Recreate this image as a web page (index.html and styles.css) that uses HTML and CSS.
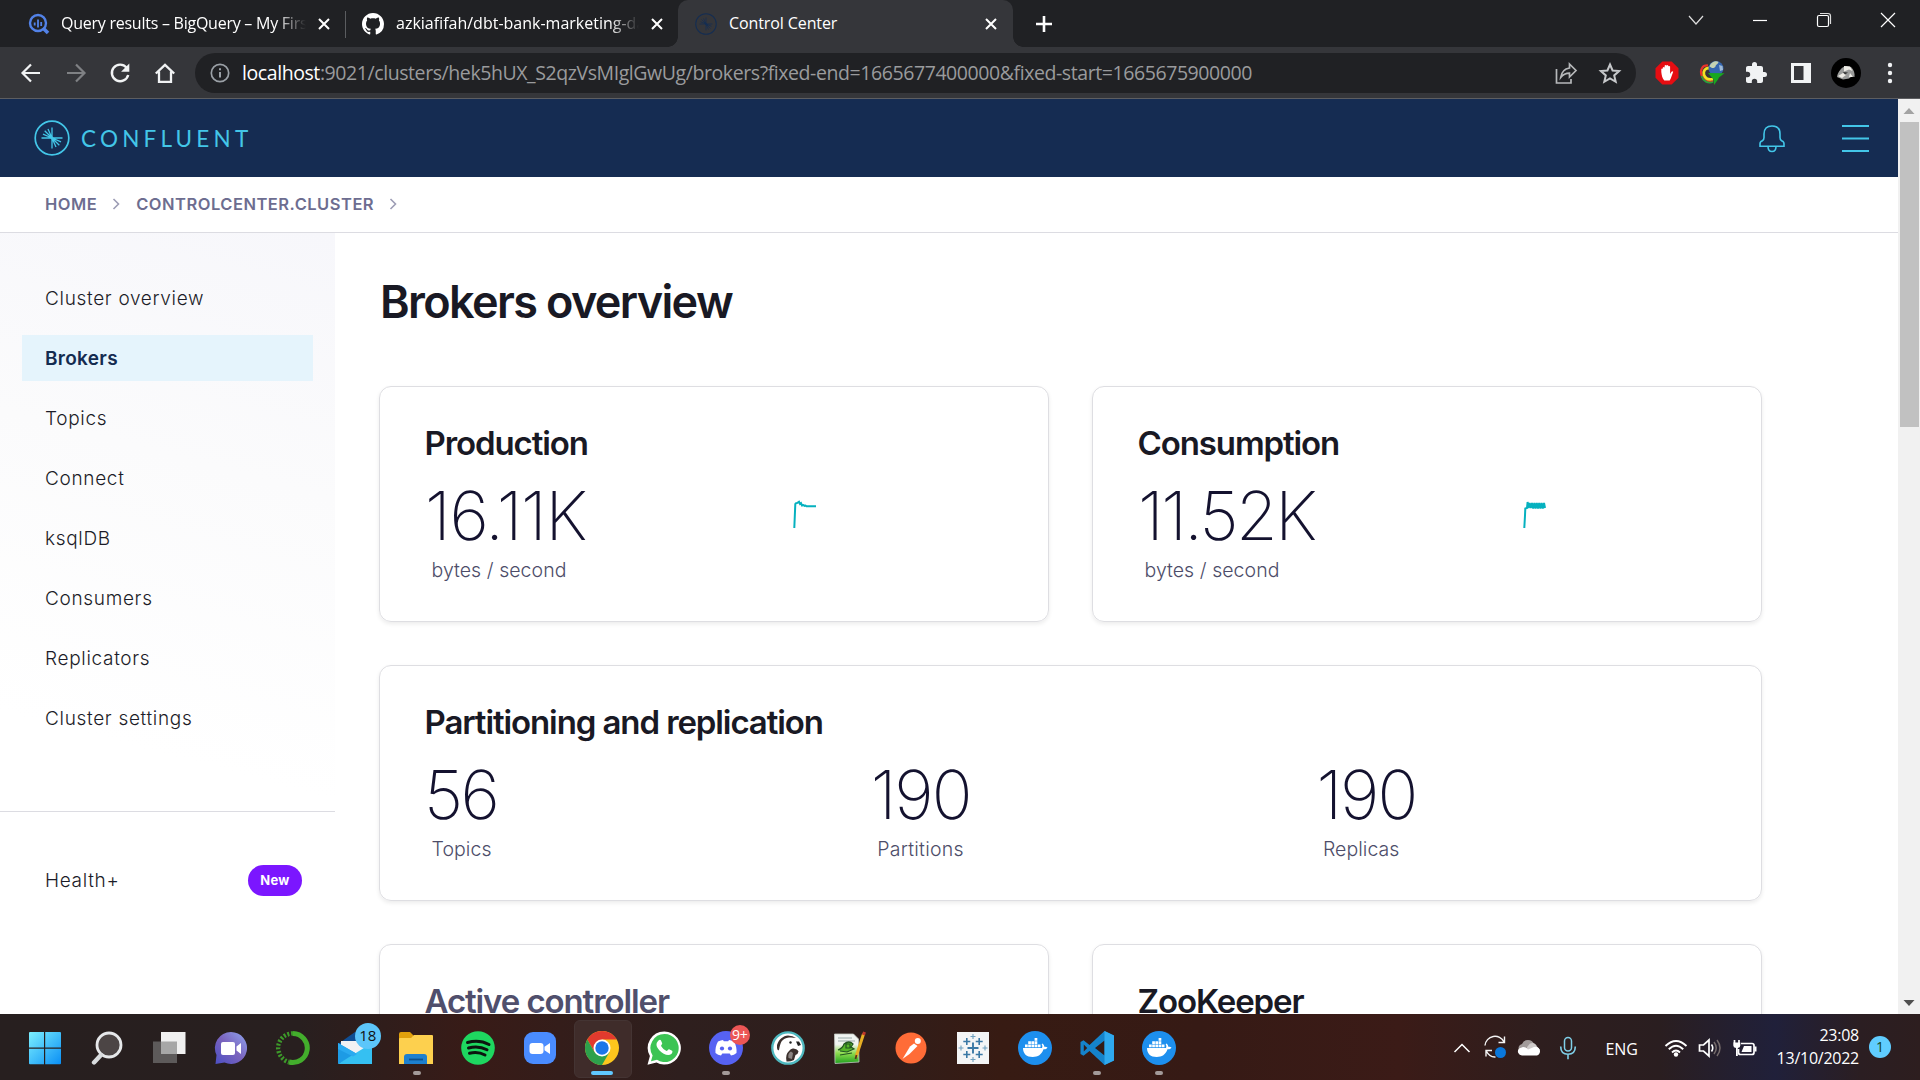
FILE: index.html
```html
<!DOCTYPE html>
<html lang="en">
<head>
<meta charset="utf-8">
<title>Control Center</title>
<link rel="stylesheet" href="styles.css">
</head>
<body>
<svg class="defs" aria-hidden="true">
  <symbol id="close" viewBox="0 0 16 16"><path d="M3 3l10 10M13 3L3 13" stroke="currentColor" stroke-width="2" fill="none"/></symbol>
  <symbol id="burst" viewBox="0 0 36 36">
    <g fill="none" stroke="currentColor" stroke-width="1.7"><circle cx="18" cy="18" r="16.8"/>
    <path d="M7.500 18H28.500M18 7.500V28.500M18 18L14 9M18 18L10.700 10.700M18 18L9 14.200M18 18L22 27M18 18L25.300 25.300M18 18L27 21.800" stroke-width="1.3"/><path d="M15.500 15.500l5 5" stroke-width="2.600"/></g>
  </symbol>
  <symbol id="whale" viewBox="0 0 34 34"><circle cx="17" cy="17" r="17" fill="#1d8fee"/><path fill="#fff" d="M5 17h19c.6-1.200.4-2.600-.4-3.700l.8-.8c1.300.9 1.900 2.100 1.900 3.300 1.200-.2 2.300 0 3.200.6-.7 1.400-2.100 2-4 1.900C23.500 23.800 20 26 14.700 26 8.500 26 5 22.700 5 17z"/><path fill="#fff" d="M7 13.400h2.700v2.800H7zM10.200 13.400h2.700v2.800h-2.700zM13.400 13.400h2.700v2.800h-2.700zM16.600 13.400h2.700v2.800h-2.700zM19.800 13.400h2.700v2.800h-2.700zM10.200 10.200h2.700V13h-2.700zM13.400 10.200h2.700V13h-2.700zM16.600 10.200h2.700V13h-2.700zM16.600 7h2.700v2.800h-2.700z"/></symbol>
</svg>

<div class="tabstrip">
  <div class="tab tab-first">
    <svg width="22" height="22" viewBox="0 0 22 22"><circle cx="10" cy="10" r="8" fill="none" stroke="#5282e8" stroke-width="2.400"/><path d="M6.700 9.500v3M10 6.500v8M13.200 9v4" stroke="#5282e8" stroke-width="1.800"/><path d="M15.500 15.500l4.500 4.500" stroke="#5282e8" stroke-width="3.600"/></svg>
    <span class="tab-title fade">Query results – BigQuery – My First</span>
    <svg class="tab-close" width="16" height="16"><use href="#close"/></svg>
  </div>
  <div class="tab tab-second">
    <svg width="22" height="22" viewBox="0 0 16 16"><path fill="#fff" d="M8 0C3.580 0 0 3.580 0 8c0 3.540 2.290 6.530 5.470 7.590.4.070.55-.17.55-.38 0-.19-.01-.82-.01-1.490-2.010.37-2.530-.49-2.690-.94-.09-.23-.48-.94-.82-1.130-.28-.15-.68-.52-.01-.53.63-.01 1.080.58 1.230.82.72 1.210 1.870.87 2.330.66.07-.52.28-.87.51-1.070-1.780-.2-3.640-.89-3.640-3.950 0-.87.31-1.590.82-2.150-.08-.2-.36-1.020.08-2.120 0 0 .67-.21 2.200.82.64-.18 1.320-.27 2-.27s1.360.09 2 .27c1.530-1.040 2.200-.82 2.200-.82.44 1.100.16 1.920.08 2.120.51.56.82 1.270.82 2.150 0 3.070-1.870 3.750-3.650 3.950.29.25.54.73.54 1.480 0 1.070-.01 1.930-.01 2.200 0 .21.15.46.55.38A8.010 8.010 0 0 0 16 8c0-4.420-3.580-8-8-8z"/></svg>
    <span class="tab-title fade">azkiafifah/dbt-bank-marketing-data</span>
    <svg class="tab-close" width="16" height="16"><use href="#close"/></svg>
  </div>
  <div class="tab tab-active">
    <svg class="fav" width="22" height="22"><use href="#burst"/></svg>
    <span class="tab-title">Control Center</span>
    <svg class="tab-close" width="16" height="16"><use href="#close"/></svg>
  </div>
  <svg class="new-tab" width="18" height="18" viewBox="0 0 18 18"><path d="M9 1v16M1 9h16" stroke="#fff" stroke-width="2.600"/></svg>
  <div class="window-buttons">
    <svg width="16" height="16" viewBox="0 0 16 16"><path d="M1 4l7 8 7-8" fill="none" stroke="#ddd" stroke-width="1.200"/></svg>
    <svg width="16" height="16" viewBox="0 0 16 16"><path d="M1 8.500h14" stroke="#fff" stroke-width="1.200"/></svg>
    <svg width="16" height="16" viewBox="0 0 16 16"><rect x="1.500" y="3.500" width="11" height="11" rx="1.500" fill="none" stroke="#fff" stroke-width="1.200"/><path d="M4 1.500h8q2.500 0 2.500 2.500v8" fill="none" stroke="#ddd" stroke-width="1.200"/></svg>
    <svg width="16" height="16" viewBox="0 0 16 16"><path d="M1 1l14 14M15 1L1 15" stroke="#fff" stroke-width="1.200"/></svg>
  </div>
</div>

<div class="toolbar">
  <div class="nav-buttons">
    <svg width="24" height="24" viewBox="0 0 24 24"><path d="M21 12H4M12 3.500L3.500 12l8.500 8.500" fill="none" stroke="#f1f3f4" stroke-width="2.200"/></svg>
    <svg width="24" height="24" viewBox="0 0 24 24"><path d="M3 12h17M12 3.500l8.500 8.500-8.500 8.500" fill="none" stroke="#7f8184" stroke-width="2.200"/></svg>
    <svg width="24" height="24" viewBox="0 0 24 24"><path d="M18.500 6.500A8.300 8.300 0 1 0 20.200 14" fill="none" stroke="#f1f3f4" stroke-width="2.400"/><path d="M21.300 2.500v8.200h-8.200z" fill="#f1f3f4"/></svg>
    <svg width="24" height="24" viewBox="0 0 24 24"><path d="M2.800 12.500L12 3.800l9.200 8.700M6 10.500v10.300h12V10.500" fill="none" stroke="#f1f3f4" stroke-width="2.300"/></svg>
  </div>
  <div class="omnibox">
    <svg width="20" height="20" viewBox="0 0 20 20"><circle cx="10" cy="10" r="8.700" fill="none" stroke="#9aa0a6" stroke-width="1.700"/><path d="M10 9v5.500M10 5.300v2" stroke="#9aa0a6" stroke-width="2"/></svg>
    <span class="url"><b>localhost</b>:9021/clusters/hek5hUX_S2qzVsMIglGwUg/brokers?fixed-end=1665677400000&amp;fixed-start=1665675900000</span>
    <svg width="24" height="24" viewBox="0 0 24 24"><path d="M2.500 8v14h14.500v-4" fill="none" stroke="#b6b8ba" stroke-width="1.700"/><path d="M15.500 3l6.500 6.500-6.500 6.500v-3.800c-4 0-6.500 1.300-8.800 4.300.7-5 3.300-8.700 8.800-9.500z" fill="none" stroke="#b6b8ba" stroke-width="1.700"/></svg>
    <svg width="24" height="24" viewBox="0 0 24 24"><path d="M12 3.500l2.600 6 6.500.6-4.900 4.300 1.500 6.400L12 17.400l-5.700 3.400 1.500-6.400-4.900-4.300 6.500-.6z" fill="none" stroke="#c6c8ca" stroke-width="2"/></svg>
  </div>
  <div class="extensions">
    <svg width="24" height="24" viewBox="0 0 24 24"><path d="M7.300.500h9.400l6.800 6.800v9.400l-6.800 6.800H7.300L.5 16.700V7.300z" fill="#e60d12"/><path d="M7.800 6.500q.9-1 1.800 0V4.700q.9-1.200 1.800-.2.900-1.200 1.800 0l.2.700q1-.7 1.700.3v7.500l1.200-2q1-1.200 1.900-.3c-1 2.500-1.700 5.500-3.500 8.800H9.300C7.300 17.500 6.600 14 6.300 11V8q.6-1 1.500-.2z" fill="#fff"/></svg>
    <svg width="26" height="26" viewBox="0 0 26 26"><path d="M9 5.500C3 5 1 10 2.500 15c1.500 5 6.500 7.500 11.500 6" fill="none" stroke="#e8332a" stroke-width="2.200"/><path d="M10 8C6 8 4 11 5 15c1.500 3.500 5 5 9 4" fill="none" stroke="#f3e321" stroke-width="2.800"/><path d="M2.500 16c1.500 5 6.500 8 11.500 6" fill="none" stroke="#2aa13c" stroke-width="1.800"/><circle cx="17" cy="8.500" r="7.500" fill="#3566b0"/><path d="M10.500 6.500c1.500-5 7-6 9-4.500-.5 2.500-2.500 2-3 4.500-2 2.500-4 1.500-6 0z" fill="#c6d3b2"/><path d="M20 5l3.500 1 .5 4-3 1z" fill="#9fbad6"/><path d="M9 13l16.500.2-5.500 4.300-1 2-4 5.500-.5-5.500z" fill="#18a81f"/></svg>
    <svg width="24" height="24" viewBox="0 0 24 24"><path fill="#f1f3f4" d="M20.500 11H19V7c0-1.100-.9-2-2-2h-4V3.500a2.500 2.500 0 0 0-5 0V5H4c-1.100 0-2 .9-2 2v3.800h1.500a2.700 2.700 0 0 1 0 5.400H2V20c0 1.100.9 2 2 2h3.800v-1.500a2.700 2.700 0 0 1 5.400 0V22H17c1.100 0 2-.9 2-2v-4h1.500a2.500 2.500 0 0 0 0-5z"/></svg>
    <svg width="24" height="24" viewBox="0 0 24 24"><path fill="#f1f3f4" fill-rule="evenodd" d="M2 2h20v20H2zM5 5v14h9.500V5z"/></svg>
    <svg width="30" height="30" viewBox="0 0 30 30"><circle cx="15" cy="15" r="15" fill="#000"/><path d="M6 19c1-6 5-10 9-11l5 1c3 3 4 6 3.500 10l-3-.5-2.500 2-6 1z" fill="#9b9c9b"/><path d="M13 8l6 .5 2.500 4.500-3.500-1.500-5 2zM7 18l5-3 3 2-4 3zM18 19l1-4 3 4z" fill="#eeece6"/><path d="M12 14l5 .5-3 2z" fill="#333"/></svg>
    <svg width="24" height="24" viewBox="0 0 24 24"><g fill="#f1f3f4"><circle cx="12" cy="4" r="2.200"/><circle cx="12" cy="12" r="2.200"/><circle cx="12" cy="20" r="2.200"/></g></svg>
  </div>
</div>

<div class="viewport">
  <div class="page">
    <header class="app-header">
      <svg class="logo" width="36" height="36"><use href="#burst"/></svg>
      <span class="brand">CONFLUENT</span>
      <svg class="bell" width="26" height="30" viewBox="0 0 26 30"><path d="M5 13.500V10Q5 2 13 2t8 8v3.500q0 2 1.500 3.200 2.500.8 2.500 3v2.600H1v-2.600q0-2.200 2.500-3Q5 15.500 5 13.500zM9 22.500q0 5 4 5t4-5" fill="none" stroke="#43c6e8" stroke-width="1.600"/></svg>
      <svg width="27" height="30" viewBox="0 0 27 30"><path d="M0 2h27M0 14.500h27M0 27h27" stroke="#43c6e8" stroke-width="1.900"/></svg>
    </header>
    <nav class="breadcrumb">
      <span>HOME</span>
      <svg width="8" height="12" viewBox="0 0 8 12"><path d="M1.500 1l5 5-5 5" fill="none" stroke="#9d9db5" stroke-width="1.600"/></svg>
      <span>CONTROLCENTER.CLUSTER</span>
      <svg width="8" height="12" viewBox="0 0 8 12"><path d="M1.500 1l5 5-5 5" fill="none" stroke="#9d9db5" stroke-width="1.600"/></svg>
    </nav>
    <div class="content">
      <aside class="sidebar">
        <div class="menu">
          <a>Cluster overview</a>
          <a class="active">Brokers</a>
          <a>Topics</a>
          <a>Connect</a>
          <a>ksqlDB</a>
          <a>Consumers</a>
          <a>Replicators</a>
          <a>Cluster settings</a>
        </div>
        <div class="menu-extra">
          <a>Health+<em>New</em></a>
        </div>
      </aside>
      <main class="main">
        <h1>Brokers overview</h1>
        <div class="cards">
          <section class="card">
            <h2>Production</h2>
            <div class="row">
              <div class="metric"><span class="value value-production">16.11K</span><span class="unit">bytes / second</span></div>
              <svg class="spark-production" width="24" height="30" viewBox="0 0 24 30"><path d="M1.300 28L2.300 4Q2.500 3 4 3l2-1.200L7 4l1-.8L9 5.500l1.500-.5 1 .8 1-.3 1 .8h9.500" fill="none" stroke="#06b1bf" stroke-width="2"/></svg>
            </div>
          </section>
          <section class="card">
            <h2>Consumption</h2>
            <div class="row">
              <div class="metric"><span class="value value-consumption">11.52K</span><span class="unit">bytes / second</span></div>
              <svg class="spark-consumption" width="24" height="30" viewBox="0 0 24 30"><path d="M1.300 28L2 15.500 2.300 8.500 4 8 4.600 2l.8 6 1.200-5 1.200 5L9 3l1.200 5.500L11.400 3l1.200 5.500L13.800 3 15 8.500 16.200 3l1.200 5.500L18.600 3l1.200 5.500L21 3l1 5" fill="none" stroke="#06b1bf" stroke-width="2"/></svg>
            </div>
          </section>
          <section class="card wide">
            <h2>Partitioning and replication</h2>
            <div class="row thirds">
              <div class="metric"><span class="value value-topics">56</span><span class="unit">Topics</span></div>
              <div class="metric"><span class="value">190</span><span class="unit unit-loose">Partitions</span></div>
              <div class="metric"><span class="value">190</span><span class="unit">Replicas</span></div>
            </div>
          </section>
          <section class="card muted"><h2>Active controller</h2></section>
          <section class="card"><h2>ZooKeeper</h2></section>
        </div>
      </main>
    </div>
  </div>
  <div class="scrollbar">
    <svg width="22" height="23" viewBox="0 0 22 23"><path d="M5.500 15h11L11 9z" fill="#a3a3a3"/></svg>
    <div class="thumb"></div>
    <svg class="down" width="22" height="23" viewBox="0 0 22 23"><path d="M5.500 9h11L11 15z" fill="#505050"/></svg>
  </div>
</div>

<footer class="taskbar">
  <div class="apps">
    <div class="app"><svg width="34" height="34" viewBox="0 0 34 34"><defs><linearGradient id="win" x1="0" y1="0" x2="1" y2="1"><stop offset="0" stop-color="#7cf0ff"/><stop offset="1" stop-color="#0a8ff5"/></linearGradient></defs><path fill="url(#win)" d="M1 2q0-1 1-1h14v15.500H1zM17.200 1H32q1 0 1 1v14.500H17.200zM1 17.700h15v15.500H2q-1 0-1-1zM17.200 17.700H33V32.200q0 1-1 1H17.200z"/></svg></div>
    <div class="app"><svg width="34" height="34" viewBox="0 0 34 34"><circle cx="19" cy="14" r="12" fill="#4c4545" stroke="#e6e8ea" stroke-width="2.800"/><path d="M11 24l-7 7.500" stroke="#d9dcde" stroke-width="4.400" stroke-linecap="round"/></svg></div>
    <div class="app"><svg width="34" height="34" viewBox="0 0 34 34"><path d="M1 10.500h24V32H1z" fill="#5d5a5a"/><path d="M9 1h24.500v22H9z" fill="#f0f0f0"/><path d="M9 10.500h16V23H9z" fill="#a7a7a7"/></svg></div>
    <div class="app"><svg width="34" height="34" viewBox="0 0 34 34"><defs><linearGradient id="chat" x1="0" y1="1" x2="1" y2="0"><stop offset="0" stop-color="#4b4fc4"/><stop offset=".5" stop-color="#7a63bd"/><stop offset="1" stop-color="#8fa6f0"/></linearGradient></defs><path d="M17 1a16 16 0 1 1-6.500 30.600L1.500 33l1-9A16 16 0 0 1 17 1z" fill="url(#chat)"/><rect x="7" y="11" width="14" height="13" rx="2" fill="#fff"/><path d="M22.500 15.500L27 12v11l-4.500-3.500z" fill="#fff"/></svg></div>
    <div class="app"><svg width="36" height="36" viewBox="0 0 36 36"><path d="M18 3.500A14.500 14.500 0 1 1 14 32" fill="none" stroke="#43ad2c" stroke-width="5"/><path d="M18 3.500A14.500 14.500 0 0 0 14 32" fill="none" stroke="#3d9a2a" stroke-width="4.600" stroke-dasharray="2 1.700"/><path d="M17 6A12 12 0 0 0 13 29" fill="none" stroke="#2a2322" stroke-width="1" stroke-dasharray="3 1.500"/></svg></div>
    <div class="app"><svg width="34" height="34" viewBox="0 0 34 34"><path d="M0 13L17 1l17 12v19H0z" fill="#0f4e94"/><path d="M3 10h28v14H3z" fill="#f1f1f3"/><path d="M0 12l19 11L0 33z" fill="#1d9be5"/><path d="M34 12L0 33h34z" fill="#35c0f2"/><path d="M0 12l19 11-4 2.400L0 18z" fill="#2aaaf0"/></svg><span class="count">18</span></div>
    <div class="app"><svg width="34" height="34" viewBox="0 0 34 34"><path d="M0 3q0-2 2-2h9l4 4v6H0z" fill="#e0a00c"/><path d="M0 8q0-1 1-1h11l3-3h18q1 0 1 1v28H0z" fill="#fdd04e"/><path d="M5 33v-7q0-3 3-3h17q3 0 3 3v7z" fill="#1d80cf"/><path d="M10 28.500h14" stroke="#0b518f" stroke-width="1.800"/></svg><i></i></div>
    <div class="app"><svg width="34" height="34" viewBox="0 0 34 34"><circle cx="17" cy="17" r="16.800" fill="#1ed760"/><path d="M6.500 11.500c7-2 15-1.500 21.500 2M7.500 17c6-1.700 13-1.200 18.500 1.800M8.500 22.300c5-1.300 10.500-1 15.500 1.700" fill="none" stroke="#0c150f" stroke-width="3" stroke-linecap="round"/></svg></div>
    <div class="app"><svg width="34" height="34" viewBox="0 0 34 34"><rect x="1" y="1" width="32" height="32" rx="9" fill="#4a8cff"/><rect x="6.500" y="12" width="14" height="11" rx="3" fill="#fff"/><path d="M21.500 15.800L27 12v11l-5.500-3.700z" fill="#fff"/></svg></div>
    <div class="app current"><svg width="34" height="34" viewBox="0 0 34 34"><circle cx="17" cy="17" r="17" fill="#fdc61d"/><path d="M2.300 8.500A17 17 0 0 1 31.700 8.500H17L9.600 21.300z" fill="#e23a2e"/><path d="M2.300 8.500A17 17 0 0 0 17 34l7.400-12.800H9.600z" fill="#2da14c"/><circle cx="17" cy="17" r="8.500" fill="#fff"/><circle cx="17" cy="17" r="6.700" fill="#1c76e8"/></svg><i></i></div>
    <div class="app"><svg width="34" height="34" viewBox="0 0 34 34"><path d="M17.500.500A16.500 16.500 0 1 1 9.500 31.500L.5 33.800l2.400-8.700A16.500 16.500 0 0 1 17.500.500z" fill="#fff"/><path d="M17.500 3A14 14 0 1 1 10 28.700L4 30.300l1.600-5.900A14 14 0 0 1 17.500 3z" fill="#3cc454"/><path d="M11.500 9.500c1-1 2.200-.8 2.600.2l1.100 2.600c.2.700-1.400 2.100-1.100 2.700 1.300 2.300 3.200 3.900 5.500 4.900.8.200 1.700-2 2.500-1.700l3 1.500c.8.500.2 2.300-.8 3.300-3 2.500-8.500-.1-11.800-3.600-3.300-3.500-4.200-6.900-1-9.900z" fill="#fff"/></svg></div>
    <div class="app"><svg width="34" height="34" viewBox="0 0 34 34"><circle cx="17" cy="17" r="17" fill="#5662f2"/><path d="M9 10.500q3-1.600 5-1.600l.8 1.300h4.400l.8-1.300q2 0 5 1.600 3 5 2.500 11.500-2.500 2.200-5.500 2.500l-1.300-2h-7.400l-1.300 2Q9 24.200 6.500 22 6 15.500 9 10.500z" fill="#fff"/><circle cx="13" cy="17.500" r="2.100" fill="#5662f2"/><circle cx="21" cy="17.500" r="2.100" fill="#5662f2"/></svg><span class="alert">9+</span><i></i></div>
    <div class="app"><svg width="34" height="34" viewBox="0 0 34 34"><circle cx="17" cy="17" r="15.700" fill="#fff" stroke="#4fb9c0" stroke-width="2.300"/><path d="M6 14C8 8 12 5 17 4.500q5 0 8 2.500-3-.8-7-.5-5 .5-7.500 4Q9 13 8 19 6.500 20 6 17z" fill="#3b302d"/><path d="M15.500 30.500q-1.500-7 2.500-10.500 2-3 4.500-2.500 4 .5 5 3-.5 3-3 3.500l-1.500 5q-4 2-7.500 1.500z" fill="#3b302d"/><path d="M17.500 27q-1-5 2.500-6.500l2 1.500-1 6z" fill="#8b8482"/><circle cx="19.500" cy="11.500" r="1.200" fill="#222"/><path d="M25 10.500h3l2 3.500-3 1z" fill="#222"/></svg></div>
    <div class="app"><svg width="34" height="34" viewBox="0 0 34 34"><defs><linearGradient id="np" x1="0" y1="0" x2="0" y2="1"><stop offset=".35" stop-color="#f1f4f1"/><stop offset=".65" stop-color="#8edc4e"/><stop offset="1" stop-color="#1fa01f"/></linearGradient></defs><path d="M2.500 3h19l5 5 .5 23-24 1.500z" fill="url(#np)" stroke="#c3c9c3" stroke-width=".8"/><path d="M6 7h14M6 10h17" stroke="#9aa" stroke-width="1"/><path d="M6 19q5-2 6-6 5-4 9 0l-2 3 3 2-7 3-7-1M8 24l12-2M14 13h4v4h-4z" fill="#56b52b" stroke="#252" stroke-width="1.200"/><path d="M31.500 3L24 26" stroke="#e6ae24" stroke-width="3"/><path d="M32.500 1l-1 3" stroke="#c0392b" stroke-width="3"/><path d="M24.500 24l-1 4" stroke="#54371b" stroke-width="1.800"/></svg></div>
    <div class="app"><svg width="34" height="34" viewBox="0 0 34 34"><circle cx="17" cy="17" r="15.500" fill="#ff6c37"/><circle cx="23.800" cy="10" r="3" fill="#fff"/><path d="M20 12.500l3.500 2.500-8 8-7 5 4.500-7.500 3-5z" fill="#fff"/></svg></div>
    <div class="app"><svg width="34" height="34" viewBox="0 0 34 34"><path d="M1 1h32v32H1z" fill="#f4f5f6"/><g fill="none" stroke="#3a78a5" stroke-width="1.900"><path d="M17 11.500v11M11.500 17h11"/><path d="M10.800 7v7M7.300 10.500h7M23.200 7v7M19.700 10.500h7M10.800 20v7M7.300 23.500h7M23.200 20v7M19.700 23.500h7" stroke-width="1.600"/><path d="M17 3v5M14.500 5.500h5M17 26v5M14.500 28.500h5M5 14.500v5M2.500 17h5M29 14.500v5M26.500 17h5" stroke-width="1.100" stroke="#6fa0bf"/></g></svg></div>
    <div class="app"><svg width="34" height="34"><use href="#whale"/></svg></div>
    <div class="app"><svg width="34" height="34" viewBox="0 0 34 34"><path d="M24.500 0L34 4.500v25L24.500 34 9.500 20l-6 4.700L.5 23V11l3-1.700 6 4.700z" fill="#1583cb"/><path d="M24.500 9.500L15 17l9.500 7.500zM3.800 13.500v7L7.200 17z" fill="#321b17"/><path d="M24.500 0L34 4.500v25L24.500 34z" fill="#2fa9ee"/></svg><i></i></div>
    <div class="app"><svg width="34" height="34"><use href="#whale"/></svg><i></i></div>
  </div>
  <div class="tray">
    <svg width="18" height="12" viewBox="0 0 18 12"><path d="M1.500 10L9 2.500l7.500 7.500" fill="none" stroke="#fff" stroke-width="1.500"/></svg>
    <svg class="t-sync" width="24" height="24" viewBox="0 0 24 24"><path d="M2 10.500A10 10 0 0 1 21 7M21.500 1.500V7.500h-6M3 21.500V15.500h6M3 15.500Q6.500 22.500 12.500 22" fill="none" stroke="#f4f4f4" stroke-width="1.400"/><circle cx="17.500" cy="17.500" r="5.500" fill="#0a78dc"/></svg>
    <svg class="t-cloud" width="24" height="16" viewBox="0 0 24 16"><path d="M3 11a4 4 0 0 1 2-7A6.500 6.500 0 0 1 17 4z" fill="#a29b9a"/><path d="M6 12L13 3.500q5-2 7 3L23 10z" fill="#cfcbca"/><path d="M5 15.500a4.200 4.200 0 0 1-3-7l4-1.500q3 0 5 2.500l6-2.500a4.300 4.300 0 0 1 3 8.500z" fill="#fff"/></svg>
    <svg class="t-mic" width="18" height="24" viewBox="0 0 18 24"><rect x="5.500" y="1.500" width="7" height="13.500" rx="3.500" fill="none" stroke="#7fcfe8" stroke-width="1.500"/><path d="M1.700 10.500q0 7.700 7.300 7.700t7.300-7.700M9 18.200v5" fill="none" stroke="#7fcfe8" stroke-width="1.600"/></svg>
    <span class="t-lang">ENG</span>
    <svg class="t-wifi" width="24" height="18" viewBox="0 0 24 18"><g fill="none" stroke="#fff" stroke-width="1.900"><path d="M1.500 7q10.500-10 21 0"/><path d="M4.800 10.300q7.200-7 14.400 0"/><path d="M8 13.500q4-4 8 0"/></g><circle cx="12" cy="15.500" r="2.200" fill="#fff"/></svg>
    <svg class="t-vol" width="24" height="20" viewBox="0 0 24 20"><path d="M1.500 7h4L11 2v16l-5.500-5h-4z" fill="none" stroke="#fff" stroke-width="1.700"/><path d="M13.500 6.500q2.500 3.500 0 7" fill="none" stroke="#fff" stroke-width="1.600"/><path d="M16 4q4.500 6 0 12M19 2q6 8 0 16" fill="none" stroke="#756b6b" stroke-width="1.500"/></svg>
    <svg class="t-bat" width="24" height="18" viewBox="0 0 24 18"><path d="M8 4.500h11q2 0 2 2v7q0 2-2 2H7.500q-2 0-2-2V10" fill="none" stroke="#fff" stroke-width="1.700"/><path d="M11 7h7.500v6H8.500z" fill="#fff"/><path d="M21.500 7.500h2v5h-2z" fill="#fff"/><path d="M1.500 1v3M6 1v3" stroke="#fff" stroke-width="1.700"/><path d="M.3 3.500h7v3q0 2-2.500 2.500v8H3V9Q.3 8.500.3 6.500z" fill="#fff"/></svg>
    <div class="clock"><span>23:08</span><span>13/10/2022</span></div>
    <span class="notif">1</span>
  </div>
</footer>
</body>
</html>
```
FILE: styles.css
```css
* { box-sizing: border-box; }
html, body { height: 100%; }
body {
  margin: 0;
  display: flex;
  flex-direction: column;
  overflow: hidden;
  background: #fff;
  font-family: Inter, "Liberation Sans", sans-serif;
  color: #191924;
}
svg { display: block; flex: none; }
.defs { position: absolute; width: 0; height: 0; }

/* browser chrome */
.tabstrip, .toolbar, .taskbar { font-family: "Open Sans", "Noto Sans", sans-serif; }
.tabstrip { display: flex; height: 47px; flex: none; background: #202124; color: #fff; }
.tab { display: flex; align-items: center; font-size: 16px; padding-top: 1px; }
.tab-title { flex: 1; margin: -2px 0 0 12px; overflow: hidden; white-space: nowrap; letter-spacing: -0.1px; line-height: 24px; }
.fade { mask-image: linear-gradient(90deg, #000 calc(100% - 30px), transparent); }
.tab-close { margin-left: 10px; }
.tab-first { width: 345px; padding-left: 28px; padding-right: 13px; }
.tab-first .tab-title { margin-left: 11px; letter-spacing: -0.25px; }
.tab-second { width: 333px; padding-left: 17px; padding-right: 13px; position: relative; }
.tab-second .tab-title { letter-spacing: 0; }
.tab-second::before { content: ""; position: absolute; left: 0; top: 11px; width: 1px; height: 27px; background: #5b5d60; }
.tab-active { width: 335px; padding-left: 17px; padding-right: 14px; background: #35363a; border-radius: 10px 10px 0 0; position: relative; }
.tab-active::before, .tab-active::after { content: ""; position: absolute; bottom: 0; width: 10px; height: 10px; }
.tab-active::before { left: -10px; background: radial-gradient(circle at 0 0, transparent 9.5px, #35363a 10px); }
.tab-active::after { right: -10px; background: radial-gradient(circle at 100% 0, transparent 9.5px, #35363a 10px); }
.fav { color: #142d52; }
.new-tab { margin: 15px 0 0 22px; }
.window-buttons { display: flex; gap: 48px; margin: 12px 24px 0 auto; }

.toolbar { display: flex; align-items: center; height: 52px; flex: none; background: #35363a; border-bottom: 1px solid #5d5e61; }
.nav-buttons { display: flex; width: 195px; padding-left: 19px; gap: 20.7px; }
.omnibox { display: flex; align-items: center; width: 1441px; height: 40px; border-radius: 20px; padding: 0 14px 0 15px; background: #202124; }
.url { margin: 0 auto 0 12px; font-size: 19.5px; color: #9a9b9d; white-space: nowrap; letter-spacing: -0.42px; }
.url b { font-weight: 400; color: #fff; }
.omnibox svg + svg { margin-left: 20px; }
.extensions { display: grid; grid-template-columns: repeat(6, 44.6px); place-items: center; padding-left: 9px; }

/* web page */
.viewport { flex: 1; display: flex; min-height: 0; }
.page { flex: 1; display: flex; flex-direction: column; min-width: 0; }
.app-header { display: flex; align-items: center; flex: none; height: 78px; padding: 1px 29px 0 33.5px; background: #152c52; color: #43c6e8; }
.logo { margin-top: -1px; }
.brand { margin-left: 11.5px; font: 400 22.5px/30px Lato, sans-serif; letter-spacing: 4.2px; }
.bell { margin-left: auto; margin-right: 57px; }
.breadcrumb { display: flex; align-items: center; flex: none; height: 56px; padding: 0 0 1px 45px; border-bottom: 1px solid #dcdce2; font-size: 16.5px; font-weight: 600; letter-spacing: 0.5px; color: #6d6d90; }
.breadcrumb svg { margin: 0 16px 0 15px; }
.content { flex: 1; display: flex; min-height: 0; overflow: hidden; }
.sidebar { width: 335px; flex: none; }
.menu { display: flex; flex-direction: column; gap: 14px; height: 579px; padding: 42px 22px 0; border-bottom: 1px solid #dcdce2; background: linear-gradient(195deg, #f7f7fb 0, #fbfbfc 40%, #fff 85%); }
.menu-extra { padding: 45px 22px 0; }
.sidebar a { display: flex; align-items: center; height: 46px; padding-left: 23px; font-size: 19px; font-weight: 300; letter-spacing: 0.68px; color: #1c1c28; }
.sidebar a.active { background: #e5f4fc; font-weight: 600; letter-spacing: 0.3px; color: #142b50; }
.sidebar em { margin-left: auto; margin-right: 11px; width: 54px; text-align: center; border-radius: 16px; background: #7b16ff; color: #fff; font: 700 13px/31px Inter, sans-serif; letter-spacing: 0.3px; }
.main { flex: 1; padding: 42px 136px 0 44px; min-width: 0; }
.main h1 { margin: 0 0 57px 1px; font-size: 45px; line-height: 54px; font-weight: 600; letter-spacing: -1.64px; white-space: nowrap; }
.cards { display: grid; grid-template-columns: 670px 670px; gap: 43px; }
.card { height: 236px; padding: 35px 45px 0; border: 1px solid #dedee2; border-radius: 12px; box-shadow: 0 2px 4px rgba(0, 0, 0, 0.08); white-space: nowrap; }
.wide { grid-column: span 2; }
.card h2 { margin: 0 0 0 -0.5px; font-size: 33px; line-height: 42px; font-weight: 600; letter-spacing: -1.1px; }
.muted h2 { color: #504f6c; }
.row { display: flex; }
.metric { display: flex; flex-direction: column; width: 170px; }
.thirds { display: grid; grid-template-columns: repeat(3, 445.7px); }
.value { margin-top: 12px; font-size: 67.5px; line-height: 80px; font-weight: 200; letter-spacing: -2px; color: #14122f; }
.value-production { letter-spacing: -1.3px; }
.value-consumption { letter-spacing: -2.5px; }
.value-topics { margin-left: -1px; letter-spacing: -2.6px; }
.unit { margin: 1px 0 0 6.5px; font-size: 19.5px; line-height: 26px; font-weight: 300; letter-spacing: 0.05px; color: #4d4d69; }
.unit-loose { letter-spacing: 0.25px; }
.spark-production { margin: 36px 0 0 197.5px; }
.spark-consumption { margin: 36px 0 0 215px; }

.scrollbar { width: 22px; flex: none; display: flex; flex-direction: column; background: #f1f1f1; }
.thumb { height: 305px; margin: 0 1px 0 2px; background: #c1c1c1; }
.down { margin-top: auto; }

/* taskbar */
.taskbar { display: flex; justify-content: space-between; height: 66px; flex: none; color: #fff; background: linear-gradient(90deg, #271f1f 0, #281f1f 300px, #381b17 470px, #341d1a 560px, #2e1f1e 680px, #2f1e1c 850px, #371b13 1000px, #361a15 1200px, #3b1b17 1400px, #2e1e1e 1540px, #2a1e20 1660px, #20203a 1775px, #2b1e22 1860px, #2d1e1f 100%); }
.apps { display: flex; padding-left: 14.5px; }
.app { position: relative; width: 61.85px; display: grid; place-items: center; }
.app > svg { margin-top: 2px; }
.app i { position: absolute; bottom: 5px; left: 27px; width: 8px; height: 4px; border-radius: 2px; background: #a39a99; }
.current::before { content: ""; position: absolute; left: 3px; top: 6px; width: 56px; height: 56px; border-radius: 6px; border: 1px solid #443433; background: #3f2c2a; }
.current > svg { position: relative; }
.current i { left: 20px; width: 22px; background: #60c8ff; }
.count, .alert { position: absolute; text-align: center; border-radius: 50%; }
.count { left: 31px; top: 9px; width: 26px; height: 26px; font-size: 15px; line-height: 25px; background: #5cc6fa; color: #111; }
.alert { left: 35px; top: 11px; width: 20px; height: 20px; font-size: 14px; line-height: 19px; letter-spacing: -0.3px; background: #ec5656; }
.tray { display: flex; align-items: center; padding-right: 29px; }
.tray svg { margin-top: 1px; }
.tray .t-sync { margin: -1px 0 0 12px; }
.tray .t-cloud { margin-left: 10px; }
.t-mic { margin-left: 18px; }
.t-lang { margin-left: 28px; margin-top: 4px; font-size: 16px; }
.t-wifi { margin-left: 26px; }
.t-vol { margin-left: 10px; }
.t-bat { margin-left: 11px; }
.clock { width: 102px; display: flex; flex-direction: column; align-items: flex-end; font-size: 16px; line-height: 23px; letter-spacing: -0.25px; }
.notif { margin-left: 10px; width: 22px; height: 22px; border-radius: 50%; background: #60cdff; color: #142; font-size: 14px; line-height: 22px; text-align: center; }
```
